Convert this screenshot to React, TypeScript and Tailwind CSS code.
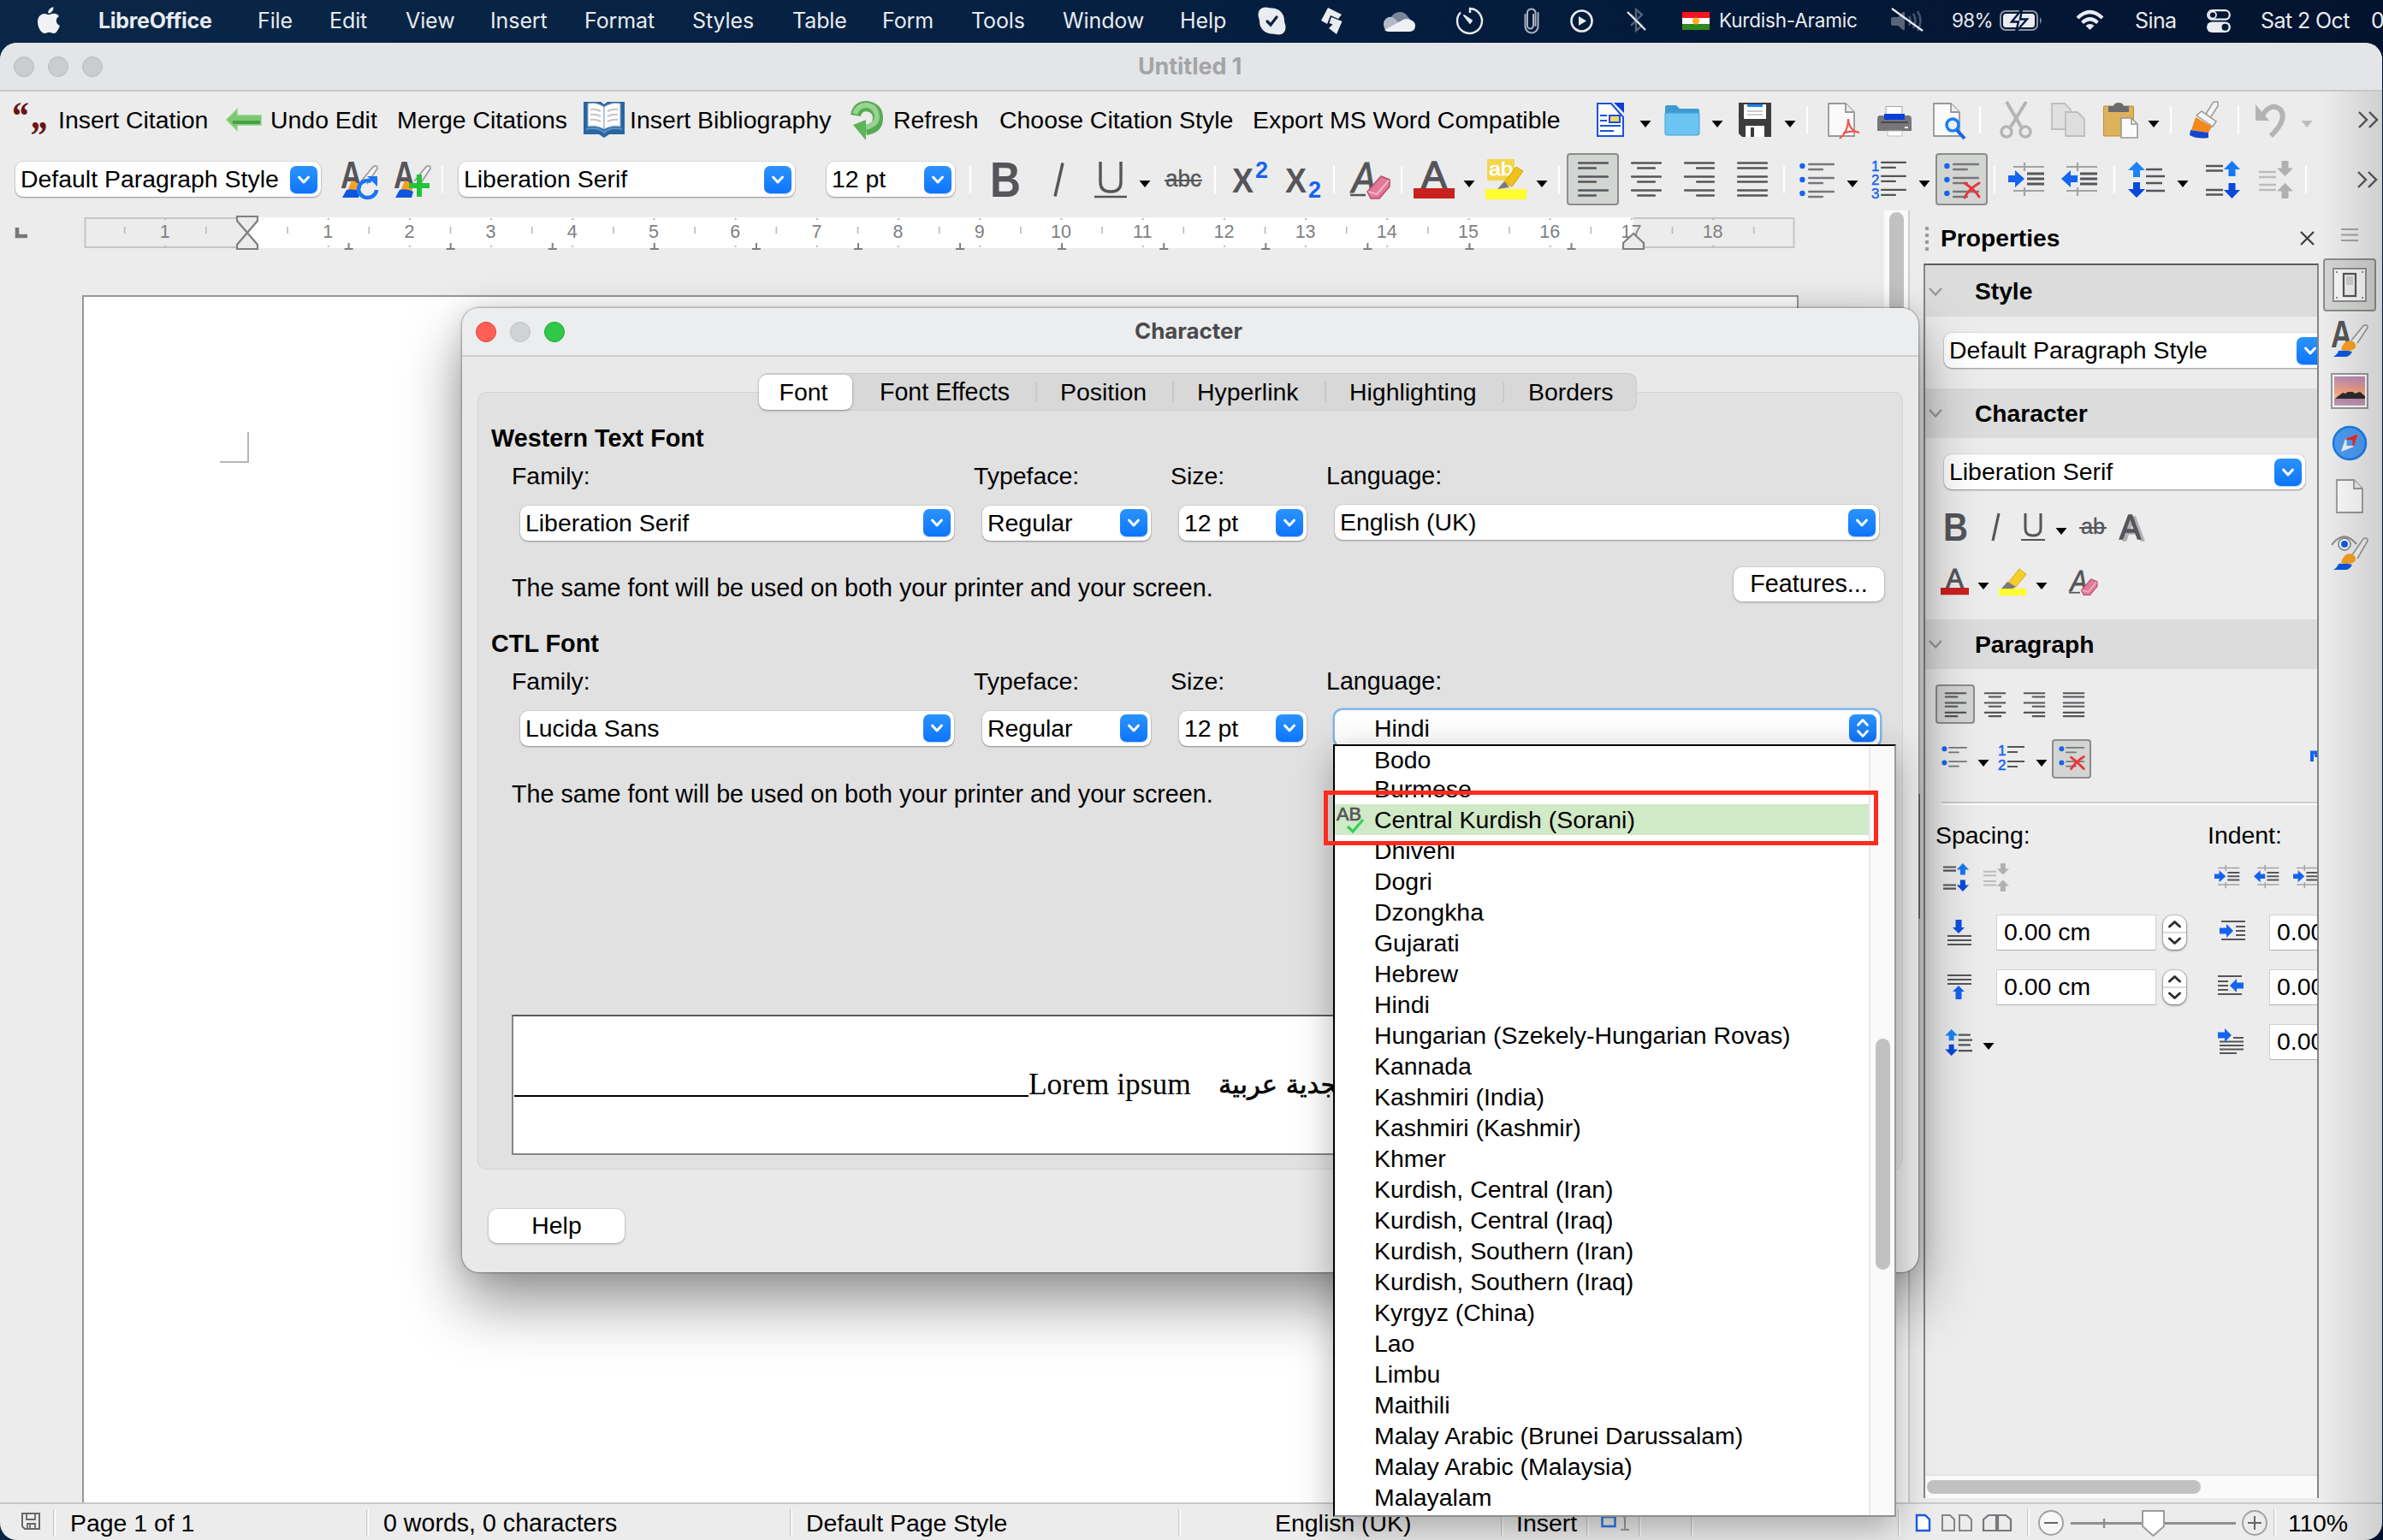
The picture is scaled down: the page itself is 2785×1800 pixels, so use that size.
import React from "react";

const INK = "#55555a";
const BLUE = "#1464f0";

type CellProps = { w: string; children?: React.ReactNode; className?: string };

/* Fixed-pitch slot used by the menu bar and tool bars. */
function Cell({ w, children, className = "" }: CellProps) {
  return <div className={`${w} shrink-0 flex items-center whitespace-nowrap ${className}`}>{children}</div>;
}

function Svg({ w, h, children, vb, className = "" }: { w: number; h: number; children: React.ReactNode; vb?: string; className?: string }) {
  return (
    <svg width={w} height={h} viewBox={vb ?? `0 0 ${w} ${h}`} fill="none" className={`shrink-0 overflow-visible ${className}`}>
      {children}
    </svg>
  );
}

function Glyph({ x = 0, y, size, len, fill = INK, weight = "normal", italic = false, heavy = 0, children, family = "Liberation Sans" }: any) {
  return (
    <text x={x} y={y} fontSize={size} fill={fill} stroke={heavy ? fill : undefined} strokeWidth={heavy} fontWeight={weight} fontStyle={italic ? "italic" : "normal"} fontFamily={`"${family}", sans-serif`} textLength={len} lengthAdjust="spacingAndGlyphs">
      {children}
    </text>
  );
}

function Caret({ faded = false }: { faded?: boolean }) {
  return (
    <Svg w={14} h={18}>
      <path d="M0.5 10H13.5L7 18Z" fill={faded ? "#bdbdbd" : "#000"} />
    </Svg>
  );
}

const Sep = () => <div className="h-8 w-[2px] bg-white" />;

/* ---------- form controls ---------- */

function DropButton({ double = false }: { double?: boolean }) {
  return (
    <div className="mr-1 flex h-8 w-8 shrink-0 items-center justify-center rounded-[7px] bg-linear-to-b from-[#2b93fb] to-[#0d74fc] shadow-[0_1px_1px_rgba(0,80,200,0.3)]">
      {double ? (
        <Svg w={14} h={22}>
          <path d="M1.5 7.5L7 1.5L12.5 7.5M1.5 14.5L7 20.5L12.5 14.5" stroke="#fff" strokeWidth={2.8} strokeLinecap="round" strokeLinejoin="round" />
        </Svg>
      ) : (
        <Svg w={14} h={10}>
          <path d="M1.500 2L7 8L12.500 2" stroke="#fff" strokeWidth={3} strokeLinecap="round" strokeLinejoin="round" />
        </Svg>
      )}
    </div>
  );
}

function Combo({ text, className }: { text: string; className: string }) {
  return (
    <div className={`${className} flex h-[41px] shrink-0 items-center justify-between rounded-[9px] bg-white pl-[6px] shadow-[0_0_0_1px_rgba(0,0,0,0.06),0_1px_2px_rgba(0,0,0,0.35)]`}>
      <span className="whitespace-nowrap">{text}</span>
      <DropButton />
    </div>
  );
}

/* ---------- paragraph icons ---------- */

type Align = "left" | "center" | "right" | "full";
function AlignIcon({ kind, w = 36, h = 41 }: { kind: Align; w?: number; h?: number }) {
  const ys = [1.5, 7.5, 17.5, 23.5, 33.5, 39.5];
  return (
    <Svg w={w} h={h} vb="0 0 36 41">
      {ys.map((y, i) => {
        const short = i % 2 === 1 && kind !== "full";
        const len = short ? 22 : 36;
        const x = kind === "left" ? 0 : kind === "right" ? 36 - len : (36 - len) / 2;
        return <rect key={y} x={x} y={y - 1.3} width={len} height={w < 36 ? 3 : 2.6} rx={1} fill={INK} />;
      })}
    </Svg>
  );
}

function BulletIcon({ w = 41, rows = 3, cross = false }: { w?: number; rows?: number; cross?: boolean }) {
  const h = rows === 3 ? 44 : 40;
  const step = rows === 3 ? 16 : 23;
  return (
    <Svg w={w} h={(h * w) / 41} vb={`0 0 41 ${h}`}>
      {Array.from({ length: rows }, (_, i) => (
        <g key={i}>
          <circle cx={3.400} cy={6 + i * step} r={rows === 3 ? 3.200 : 4.200} fill={BLUE} />
          <rect x={10} y={2.700 + i * step} width={31} height={2.600} rx={1} fill="#77777b" />
          <rect x={10} y={(rows === 3 ? 8.700 : 10.500) + i * step} width={18} height={2.600} rx={1} fill="#77777b" />
        </g>
      ))}
      {cross && <path d={rows === 3 ? "M24 26C30 30 38 37 41 42M41 26C34 30 27 37 24 43" : "M19 20C26 25 34 33 40 39M40 19C32 24 24 32 19 39"} stroke="#ee3438" strokeWidth={rows === 3 ? 3 : 4} strokeLinecap="round" />}
    </Svg>
  );
}

function NumberIcon() {
  return (
    <Svg w={41} h={46}>
      {[0, 1, 2].map((i) => (
        <g key={i}>
          <Glyph x={0} y={13 + i * 16} size={17} fill={BLUE} heavy={0.4}>{i + 1}</Glyph>
          <rect x={11} y={1.700 + i * 16} width={30} height={2.400} rx={1} fill={INK} />
          <rect x={11} y={7.700 + i * 16} width={18} height={2.400} rx={1} fill={INK} />
        </g>
      ))}
    </Svg>
  );
}

function IndentIcon({ w = 43, left = false }: { w?: number; left?: boolean }) {
  return (
    <Svg w={w} h={(w * 40) / 43} vb="0 0 43 40">
      <path d="M6 5H42M6 33H42M19 0V10M19 29V39" stroke="#a3a3a7" strokeWidth={2.200} />
      <path d="M22 13H42M22 19H42M22 25H42" stroke={INK} strokeWidth={2.800} />
      {left ? <path d="M0 19L11 9V15H19V23H11V29Z" fill={BLUE} /> : <path d="M19 19L8 9V15H0V23H8V29Z" fill={BLUE} />}
    </Svg>
  );
}

function LineSpacingIcon({ w = 42 }: { w?: number }) {
  return (
    <Svg w={w} h={w} vb="0 0 42 42">
      <path d="M9 0L19 10H13V18H5V10H-1Z" fill="#1b84f8" />
      <path d="M9 42L19 32H13V24H5V32H-1Z" fill="#0b48dc" />
      <path d="M20 9H39M20 17H42M20 25H39M20 34H42" stroke={INK} strokeWidth={w < 40 ? 3 : 2.500} />
    </Svg>
  );
}

function ParaSpacingIcon({ w = 40, off = false }: { w?: number; off?: boolean }) {
  const sw = w < 40 ? 2.9 : 2.4;
  return off ? (
    <Svg w={w} h={(w * 44) / 40} vb="0 0 40 44">
      <path d="M0 13H20M0 19H20M0 28H20M0 34H20" stroke="#bcbcbc" strokeWidth={sw} />
      <path d="M30.500 18L21 8.500H26.500V0H34.500V8.500H40Z M30.500 26L21 35.500H26.500V44H34.500V35.500H40Z" fill="#b0b0b0" />
    </Svg>
  ) : (
    <Svg w={w} h={(w * 44) / 40} vb="0 0 40 44">
      <path d="M0 6H20M0 11.500H20M0 34H20M0 39.500H20" stroke={INK} strokeWidth={sw} />
      <path d="M30.500 0L40 10H34.500V18H26.500V10H21Z" fill="#1577f5" />
      <path d="M30.500 44L21 34H26.500V26H34.500V34H40Z" fill="#0b48dc" />
    </Svg>
  );
}

/* Text-on-lines icons used beside the spacing and indent fields. */
function FieldIcon({ kind }: { kind: "above" | "below" | "before" | "after" | "first" }) {
  const lines: Record<string, string> = {
    above: "M1 19H29M1 24H29M1 29H29",
    below: "M1 1H29M1 6H29M1 11H29",
    before: "M2 2H30M19 8H30M19 13H30M19 18H30M2 23H30",
    after: "M0 2H28M0 8H12M0 13H12M0 18H12M0 23H28",
    first: "M18 10H30M2 14.500H30M2 19H30M2 23.500H30M2 28H22",
  };
  const arrows: Record<string, string> = {
    above: "M14 16L7 9H10.500V0H17.500V9H21Z",
    below: "M14 13L21 20H17.500V29H10.500V20H7Z",
    before: "M16 13L8 5V9.500H0V16.500H8V21Z",
    after: "M14 13L22 5V9.500H30V16.500H22V21Z",
    first: "M16 7L8 -1V3.500H0V10.500H8V15Z",
  };
  return (
    <Svg w={30} h={30}>
      <path d={lines[kind]} stroke={INK} strokeWidth={2.200} />
      <path d={arrows[kind]} fill={kind === "above" ? "#0b4fe0" : BLUE} />
    </Svg>
  );
}

/* ---------- character icons ---------- */

function EraserIcon({ w = 46 }: { w?: number }) {
  return (
    <Svg w={w} h={(w * 44) / 46} vb="0 0 46 44">
      <Glyph x={2} y={37} size={50} len={28} italic heavy={1.2}>A</Glyph>
      <path d="M0 40H18" stroke={INK} strokeWidth={2.400} />
      <path d="M20 36L36 18L46 22V30L34 44L24 44Z" fill="#e07a98" stroke="#b9486c" strokeWidth={1.500} strokeLinejoin="round" />
      <path d="M21 36L31 39L45 23" stroke="#f6b3c5" strokeWidth={2} />
    </Svg>
  );
}

function FontColorIcon({ w = 48 }: { w?: number }) {
  return (
    <Svg w={w} h={(w * 44) / 48} vb="0 0 48 44">
      <Glyph x={9} y={32} size={45} len={30} heavy={1.4}>A</Glyph>
      <rect x={0} y={32} width={48} height={12} fill="#c9211e" />
    </Svg>
  );
}

function StyleBrush({ badge, w = 44 }: { badge?: "refresh" | "plus" | "big"; w?: number }) {
  const big = badge === "big";
  return (
    <Svg w={w} h={w} vb="0 0 44 44">
      <path d="M24 24L38 7Q43 4 43 9L31 27" fill="#f4f4f4" stroke="#9c9ca0" strokeWidth={1.800} />
      <Glyph x={0} y={32} size={45} len={25} weight="bold">A</Glyph>
      <path d={big ? "M12 35Q14 25 22 24Q30 25 29 32Q25 38 12 35Z" : "M8 35L13 23L22 27L22 36Z"} fill="#f7a021" />
      <path d={big ? "M3 43Q8 40 9 36Q18 35 25 37Q22 43 17 43Z" : "M2 43L7 34Q16 32 23 36L21 43Z"} fill="#0b57e0" />
      {badge === "refresh" && (
        <>
          <path d="M36 24A10.500 10 0 1 0 42 34" stroke="#1b74f4" strokeWidth={4.500} />
          <path d="M31 18H43V30Z" fill="#1b74f4" />
        </>
      )}
      {badge === "plus" && <path d="M30 16V42M18 29H42" stroke="#22c33b" strokeWidth={6} />}
    </Svg>
  );
}

/* ---------- document icons ---------- */

function PageShape({ w, h, children }: { w: number; h: number; children?: React.ReactNode }) {
  return (
    <Svg w={w} h={h} vb={`0 0 ${w} ${h}`}>
      <path d={`M1 1H21L31 11V${h - 1}H1Z`} fill="#fafafa" stroke="#98989c" strokeWidth={1.800} />
      <path d="M21 1V11H31" fill="#ececec" stroke="#98989c" strokeWidth={1.800} />
      {children}
    </Svg>
  );
}

function BookIcon() {
  return (
    <Svg w={48} h={42}>
      <path d="M0 0H20L24 3L28 0H48V38H30L24 42L18 38H0Z" fill="#2a65a0" />
      <path d="M5 2Q16 0 24 6V32Q15 27 5 29Z" fill="#fdfdfd" stroke="#8aa6c4" />
      <path d="M43 2Q32 0 24 6V32Q33 27 43 29Z" fill="#fdfdfd" stroke="#8aa6c4" />
      <path d="M8 9Q14 8 20 11M8 15Q14 14 20 17M8 21Q14 20 20 23M40 9Q34 8 28 11M40 15Q34 14 28 17M40 21Q34 20 28 23" stroke="#c4c4c4" strokeWidth={2.200} />
      <path d="M3 32Q17 29 24 36Q31 29 45 32" stroke="#5c94cb" strokeWidth={2} />
    </Svg>
  );
}

function MenuBar() {
  return (
    <div className="flex h-[50px] shrink-0 items-center pb-[2px] pl-[44px] font-[Inter,sans-serif] text-[25px] tracking-[-0.1px] text-[#e8ebf0]">
      <Cell w="w-[71px]">
        <Svg w={26} h={32}>
          <path d="M18.500 0.300C18.800 4 15.500 7.800 12.300 7.600C11.800 4.200 15 0.700 18.500 0.300ZM13 9.300C14.500 9.300 16.300 7.800 19.200 7.800C21.500 7.800 23.600 9 24.900 10.900C20.300 13.600 21 19.900 25.900 21.900C24.700 25.400 22 31 18.900 31C16.800 31 16 29.700 13.400 29.700C10.800 29.700 9.900 31 7.900 31C4.400 31 0 24.200 0 17.600C0 11.400 4 8 7.800 8C10.200 8 11.800 9.300 13 9.300Z" fill="#f0f2f5" />
        </Svg>
      </Cell>
      <Cell w="w-[186px]" className="font-bold tracking-[-0.3px]">LibreOffice</Cell>
      <Cell w="w-[84px]">File</Cell>
      <Cell w="w-[89px]">Edit</Cell>
      <Cell w="w-[99px]">View</Cell>
      <Cell w="w-[110px]">Insert</Cell>
      <Cell w="w-[126px]">Format</Cell>
      <Cell w="w-[117px]">Styles</Cell>
      <Cell w="w-[105px]">Table</Cell>
      <Cell w="w-[104px]">Form</Cell>
      <Cell w="w-[107px]">Tools</Cell>
      <Cell w="w-[137px]">Window</Cell>
      <Cell w="w-[91px]">Help</Cell>
      <Cell w="w-[74px]">
        <Svg w={33} h={33}>
          <path d="M9 0.500C12 0.500 13 1.500 16.500 1.500C25 1.500 31 8 31 16C31 19 32.500 20 32.500 24C32.500 29 29 32.500 24 32.500C21 32.500 20 31.500 16.500 31.500C8 31.500 2 25 2 17C2 14 0.500 13 0.500 9C0.500 4 4 0.500 9 0.500Z" fill="#e9ecf1" />
          <path d="M11 17L15 21L22 12" stroke="#0b2142" strokeWidth={3.200} strokeLinecap="round" />
        </Svg>
      </Cell>
      <Cell w="w-[70px]">
        <Svg w={25} h={31}>
          <path d="M8 0L24 8L20 13L11 9L7 19L0 15Z" fill="#e9ecf1" />
          <path d="M12 11L24.500 16L18 31L9 24L13.500 19.500L9.500 18Z" fill="#e9ecf1" />
        </Svg>
      </Cell>
      <Cell w="w-[88px]">
        <Svg w={40} h={27}>
          <path d="M11 12A11 11 0 0 1 31 8L36 14L20 20L10 14Z" fill="#7b8698" />
          <path d="M9 26A9 9 0 0 1 9 9Q14 8 19 14L33 26Z" fill="#b4bbc7" />
          <path d="M4 24L26 12Q30 10 34 12Q40 14 40 19Q40 26 33 26H9Q6 26 4 24Z" fill="#eef0f4" />
        </Svg>
      </Cell>
      <Cell w="w-[79px]">
        <Svg w={32} h={32}>
          <path d="M16 7V2A14.500 14.500 0 1 1 5 6.500" stroke="#e9ecf1" strokeWidth={2.400} />
          <path d="M9 10L18 16L16 19Z" fill="#e9ecf1" stroke="#e9ecf1" strokeWidth={2} strokeLinejoin="round" />
        </Svg>
      </Cell>
      <Cell w="w-[54px]">
        <Svg w={18} h={32}>
          <path d="M1.500 9V23A7.500 7.500 0 0 0 16.500 23V7M13.500 22V6A5 5 0 0 0 4 6V22A3.500 3.500 0 0 0 11 22V9" stroke="#aab2c0" strokeWidth={2} strokeLinecap="round" />
        </Svg>
      </Cell>
      <Cell w="w-[67px]">
        <Svg w={27} h={27}>
          <circle cx={13.500} cy={13.500} r={12} stroke="#e9ecf1" strokeWidth={2.600} />
          <path d="M10 8V19L19 13.500Z" fill="#e9ecf1" />
        </Svg>
      </Cell>
      <Cell w="w-[64px]">
        <Svg w={22} h={28}>
          <path d="M4 7L17 20L10 26V1L17 7L4 20" stroke="#566378" strokeWidth={2.400} />
          <path d="M0 4L21 25" stroke="#e9ecf1" strokeWidth={2.200} />
        </Svg>
      </Cell>
      <Cell w="w-[43px]">
        <Svg w={32} h={21}>
          <rect width={32} height={7} fill="#fb1220" />
          <rect y={7} width={32} height={7} fill="#fff" />
          <rect y={14} width={32} height={7} fill="#2f8a1d" />
          <circle cx={16} cy={10.500} r={4} fill="#fdb022" />
        </Svg>
      </Cell>
      <Cell w="w-[201px]" className="text-[22.500px] tracking-[-0.2px]">Kurdish-Aramic</Cell>
      <Cell w="w-[71px]">
        <Svg w={38} h={28}>
          <path d="M0 12Q0 10 2 10H8L14 4Q16 3 16 5V24Q16 26 14 25L8 20H2Q0 20 0 18Z" fill="#566378" />
          <path d="M21 9Q24 14 21 20M26 6Q31 14 26 23M31 3Q38 14 31 26" stroke="#46536a" strokeWidth={2.600} />
          <path d="M1 0L37 26" stroke="#e9ecf1" strokeWidth={2.200} />
        </Svg>
      </Cell>
      <Cell w="w-[56px]" className="text-[22.500px] tracking-[-0.7px]">98%</Cell>
      <Cell w="w-[89px]">
        <Svg w={51} h={24}>
          <rect x={1} y={1} width={43} height={22} rx={6} stroke="#8b95a5" strokeWidth={2} />
          <rect x={4} y={4} width={37} height={16} rx={3.500} fill="#e9ecf1" />
          <path d="M47 8Q50.500 12 47 16Z" fill="#8b95a5" />
          <path d="M26 -1L14 13.500H22L19 25L32 10.500H24Z" fill="#e9ecf1" stroke="#03193b" strokeWidth={2.400} />
        </Svg>
      </Cell>
      <Cell w="w-[69px]">
        <Svg w={33} h={24}>
          <path d="M2 9Q16.500 -5 31 9M7.500 14.500Q16.500 6 25.500 14.500" stroke="#e9ecf1" strokeWidth={4.200} />
          <path d="M16.500 23L11.500 18Q16.500 14 21.500 18Z" fill="#e9ecf1" />
        </Svg>
      </Cell>
      <Cell w="w-[84px]" className="tracking-[-0.6px]">Sina</Cell>
      <Cell w="w-[63px]">
        <Svg w={28} h={27}>
          <rect x={1.200} y={1.200} width={25.600} height={10.500} rx={5.200} stroke="#e9ecf1" strokeWidth={2.200} />
          <circle cx={7} cy={6.500} r={4} stroke="#e9ecf1" strokeWidth={1.800} />
          <rect x={0} y={14.500} width={28} height={12.500} rx={6.200} fill="#e9ecf1" />
          <circle cx={21.500} cy={20.700} r={4} fill="#041c3d" />
        </Svg>
      </Cell>
      <Cell w="w-[129px]" className="tracking-[-0.6px]">Sat 2 Oct</Cell>
      <Cell w="w-[30px]">0</Cell>
    </div>
  );
}

function StandardBar() {
  return (
    <div className="flex h-[66px] shrink-0 items-center pl-[12px]">
      <Cell w="w-[56px]">
        <Svg w={46} h={40}>
          <Glyph x={0} y={31} size={46} len={21} fill="#6b1416" weight="bold" family="Liberation Serif" italic>“</Glyph>
          <Glyph x={25} y={30} size={46} len={21} fill="#6b1416" weight="bold" family="Liberation Serif" italic>„</Glyph>
        </Svg>
      </Cell>
      <Cell w="w-[196px]">Insert Citation</Cell>
      <Cell w="w-[52px]">
        <Svg w={43} h={26}>
          <path d="M1 13L13 1V8H41V19H13V25Z" fill="#7cc871" stroke="#8dcf86" strokeWidth={1.500} />
          <path d="M8 16H40" stroke="#45a042" strokeWidth={4} />
        </Svg>
      </Cell>
      <Cell w="w-[148px]">Undo Edit</Cell>
      <Cell w="w-[218px]">Merge Citations</Cell>
      <Cell w="w-[54px]"><BookIcon /></Cell>
      <Cell w="w-[258px]">Insert Bibliography</Cell>
      <Cell w="w-[50px]">
        <Svg w={40} h={44}>
          <path d="M6 17Q8 6 19 6Q32 8 32 20Q32 32 18 34" stroke="#58ab53" strokeWidth={12} />
          <path d="M5 15Q9 4 20 5Q30 7 31 18Q31 28 17 31" stroke="#98d391" strokeWidth={6} />
          <path d="M3 28L18 22V46Z" fill="#5fb45a" />
        </Svg>
      </Cell>
      <Cell w="w-[124px]">Refresh</Cell>
      <Cell w="w-[296px]">Choose Citation Style</Cell>
      <Cell w="w-[402px]">Export MS Word Compatible</Cell>
      <Cell w="w-[50px]">
        <Svg w={32} h={40}>
          <path d="M1 1H17L31 17V39H1Z" fill="#fff" stroke="#1c51dd" strokeWidth={2} />
          <path d="M20 0H32V12Z" fill="#0d3fd6" />
          <path d="M4 15H12M4 21H12M4 27H28M4 33H20" stroke="#1c51dd" strokeWidth={2} />
          <rect x={15} y={15} width={12} height={8} fill="#fbd66b" stroke="#1c51dd" strokeWidth={2} />
        </Svg>
      </Cell>
      <Cell w="w-[30px]"><Caret /></Cell>
      <Cell w="w-[54px]">
        <Svg w={40} h={37}>
          <path d="M0 3Q0 1 2 1H13L17 5H38Q40 5 40 7V20H0Z" fill="#3e9bd0" />
          <path d="M0 10H40V34Q40 36 38 36H2Q0 36 0 34Z" fill="#6cc4f2" stroke="#3f9fd6" />
        </Svg>
      </Cell>
      <Cell w="w-[32px]"><Caret /></Cell>
      <Cell w="w-[53px]">
        <Svg w={38} h={40}>
          <path d="M0 0H38V40H4L0 36Z" fill="#3d3d40" />
          <rect x={6} y={2} width={26} height={17} fill="#fff" />
          <rect x={10} y={2} width={18} height={3} fill="#1b84f8" />
          <path d="M10 10H28M10 14H28" stroke="#bdbdbd" strokeWidth={1.600} />
          <path d="M8 27H30V40H8Z" fill="#fff" />
          <rect x={14} y={29} width={4} height={11} fill="#3d3d40" />
        </Svg>
      </Cell>
      <Cell w="w-[26px]"><Caret /></Cell>
      <Cell w="w-[25px]"><Sep /></Cell>
      <Cell w="w-[58px]">
        <PageShape w={38} h={40}>
          <path d="M14 42Q24 34 24 19M24 19Q25 33 37 35M18 36Q28 32 37 35" stroke="#f2554f" strokeWidth={2.200} />
        </PageShape>
      </Cell>
      <Cell w="w-[65px]" className="pt-1">
        <Svg w={40} h={36}>
          <rect x={10} y={0.500} width={19} height={14} fill="#fff" stroke="#a5a5a8" />
          <path d="M2 11H38Q40 12 40 15V29H0V15Q0 12 2 11Z" fill="#77777b" />
          <rect x={8} y={9} width={24} height={7} fill="#0d3fd6" />
          <path d="M4 19H36" stroke="#4b4b4f" strokeWidth={2} />
          <rect x={12} y={29} width={17} height={6} fill="#fff" stroke="#c0c0c0" />
          <rect x={32} y={24} width={4} height={2} fill="#fff" />
        </Svg>
      </Cell>
      <Cell w="w-[54px]">
        <PageShape w={38} h={40}>
          <circle cx={23} cy={26} r={7} fill="#eaf3ff" stroke="#1b7ff5" strokeWidth={3.500} />
          <path d="M28 32L37 42" stroke="#1467ee" strokeWidth={4} />
        </PageShape>
      </Cell>
      <Cell w="w-[24px]"><Sep /></Cell>
      <Cell w="w-[60px]">
        <Svg w={38} h={44}>
          <path d="M8 1L25 30M31 1L13 30" stroke="#b5b5b7" strokeWidth={4} />
          <circle cx={8} cy={36} r={6} stroke="#b5b5b7" strokeWidth={3.500} />
          <circle cx={30} cy={36} r={6} stroke="#b5b5b7" strokeWidth={3.500} />
        </Svg>
      </Cell>
      <Cell w="w-[61px]">
        <Svg w={40} h={40}>
          <path d="M1 1H16L23 8V31H1Z" fill="#e0e0e0" stroke="#bebec0" strokeWidth={1.800} />
          <path d="M17 11H31L39 19V39H17Z" fill="#dedede" stroke="#bebec0" strokeWidth={1.800} />
        </Svg>
      </Cell>
      <Cell w="w-[52px]">
        <Svg w={41} h={41}>
          <rect x={0.500} y={4} width={35} height={35} rx={1} fill="#ddb25b" stroke="#b98c34" />
          <path d="M6 11V4H12Q13 0 18 0Q23 0 24 4H30V11Z" fill="#6b6b6e" />
          <path d="M21 18H33L40 25V41H21Z" fill="#fbfbfb" stroke="#98989c" strokeWidth={1.600} />
          <path d="M33 18V25H40" stroke="#98989c" strokeWidth={1.600} />
        </Svg>
      </Cell>
      <Cell w="w-[26px]"><Caret /></Cell>
      <Cell w="w-[22px]"><Sep /></Cell>
      <Cell w="w-[57px]">
        <Svg w={36} h={44}>
          <path d="M20 15L29 1H34V6L25 20Z" fill="#f4f4f4" stroke="#9a9a9e" strokeWidth={1.500} />
          <path d="M9 17L15 12L32 24L28 30Z" fill="#f4f4f4" stroke="#9a9a9e" strokeWidth={1.500} />
          <path d="M8 19L27 30L23 37L3 34Z" fill="#f3881b" />
          <path d="M2 34L23 37V43Q10 45 1 40Z" fill="#1545cf" />
        </Svg>
      </Cell>
      <Cell w="w-[21px]"><Sep /></Cell>
      <Cell w="w-[53px]">
        <Svg w={36} h={42}>
          <path d="M8 16Q18 0 29 9Q38 20 18 40" stroke="#b4b4b6" strokeWidth={6} />
          <path d="M0 3V22H16Z" fill="#b4b4b6" />
        </Svg>
      </Cell>
      <Cell w="w-[67px]"><Caret faded /></Cell>
      <Chevrons />
    </div>
  );
}

function Chevrons() {
  return (
    <Svg w={24} h={20}>
      <path d="M1 1L10 10L1 19M13 1L22 10L13 19" stroke={INK} strokeWidth={2.400} />
    </Svg>
  );
}

const pressed = "flex items-center justify-center rounded-[4px] border-2 border-[#8b8d8a] bg-[#d3d5d2]";

function FormattingBar() {
  return (
    <div className="flex h-[73px] shrink-0 items-center pl-[18px]">
      <Cell w="w-[380px]"><Combo text="Default Paragraph Style" className="w-[357px]" /></Cell>
      <Cell w="w-[62px]"><StyleBrush badge="refresh" /></Cell>
      <Cell w="w-[56px]"><StyleBrush badge="plus" /></Cell>
      <Cell w="w-[20px]"><Sep /></Cell>
      <Cell w="w-[430px]"><Combo text="Liberation Serif" className="w-[393px]" /></Cell>
      <Cell w="w-[167px]"><Combo text="12 pt" className="w-[150px]" /></Cell>
      <Cell w="w-[26px]"><Sep /></Cell>
      <Cell w="w-[71px]"><Svg w={32} h={40}><Glyph x={-2} y={40} size={57} len={36} weight="bold">B</Glyph></Svg></Cell>
      <Cell w="w-[49px]"><Svg w={14} h={40}><path d="M12 0.500L3 39.500" stroke={INK} strokeWidth={3.400} /></Svg></Cell>
      <Cell w="w-[52px]">
        <Svg w={38} h={42}>
          <path d="M7 0V24Q7 35 19 35Q31 35 31 24V0" stroke={INK} strokeWidth={3.400} />
          <path d="M0 41H38" stroke={INK} strokeWidth={2.400} />
        </Svg>
      </Cell>
      <Cell w="w-[30px]"><Caret /></Cell>
      <Cell w="w-[58px]">
        <Svg w={44} h={24}>
          <Glyph x={1} y={20} size={27} len={42} heavy={0.4}>abc</Glyph>
          <path d="M0 13H44" stroke={INK} strokeWidth={2} />
        </Svg>
      </Cell>
      <Cell w="w-[21px]"><Sep /></Cell>
      <Cell w="w-[62px]">
        <Svg w={42} h={42}>
          <Glyph x={0} y={36} size={40} len={25} weight="bold">X</Glyph>
          <Glyph x={27} y={19} size={28} len={15} fill={BLUE} weight="bold">2</Glyph>
        </Svg>
      </Cell>
      <Cell w="w-[56px]">
        <Svg w={42} h={42}>
          <Glyph x={0} y={36} size={40} len={25} weight="bold">X</Glyph>
          <Glyph x={27} y={42} size={28} len={15} fill={BLUE} weight="bold">2</Glyph>
        </Svg>
      </Cell>
      <Cell w="w-[20px]"><Sep /></Cell>
      <Cell w="w-[59px]"><EraserIcon /></Cell>
      <Cell w="w-[15px]"><Sep /></Cell>
      <Cell w="w-[58px]"><FontColorIcon /></Cell>
      <Cell w="w-[26px]"><Caret /></Cell>
      <Cell w="w-[59px]">
        <Svg w={48} h={46}>
          <rect x={2} y={-1} width={32} height={25} fill="#f4d64a" />
          <Glyph x={4} y={18} size={22} len={28} fill="#fff" heavy={0.6}>ab</Glyph>
          <path d="M22 26L36 8L44 13L31 31Z" fill="#f2c118" stroke="#cf9f10" />
          <path d="M14 34L22 25L28 32Z" fill="#7a7a7d" />
          <rect x={0} y={34} width={48} height={12} fill="#ffff30" />
        </Svg>
      </Cell>
      <Cell w="w-[26px]"><Caret /></Cell>
      <Cell w="w-[10px]"><Sep /></Cell>
      <Cell w="w-[75px]"><div className={`${pressed} h-[61px] w-[61px]`}><AlignIcon kind="left" /></div></Cell>
      <Cell w="w-[62px]"><AlignIcon kind="center" /></Cell>
      <Cell w="w-[62px]"><AlignIcon kind="right" /></Cell>
      <Cell w="w-[54px]"><AlignIcon kind="full" /></Cell>
      <Cell w="w-[19px]"><Sep /></Cell>
      <Cell w="w-[55px]"><BulletIcon /></Cell>
      <Cell w="w-[29px]"><Caret /></Cell>
      <Cell w="w-[55px]"><NumberIcon /></Cell>
      <Cell w="w-[20px]"><Caret /></Cell>
      <Cell w="w-[68px]"><div className={`${pressed} h-[61px] w-[61px]`}><BulletIcon cross /></div></Cell>
      <Cell w="w-[17px]"><Sep /></Cell>
      <Cell w="w-[62px]"><IndentIcon /></Cell>
      <Cell w="w-[61px]"><IndentIcon left /></Cell>
      <Cell w="w-[18px]"><Sep /></Cell>
      <Cell w="w-[56px]"><LineSpacingIcon /></Cell>
      <Cell w="w-[34px]"><Caret /></Cell>
      <Cell w="w-[62px]"><ParaSpacingIcon /></Cell>
      <Cell w="w-[54px]"><ParaSpacingIcon off /></Cell>
      <Cell w="w-[61px]"><Sep /></Cell>
      <Chevrons />
    </div>
  );
}

function Ruler() {
  const pitch = 95.2;
  const zero = 288.5;
  const nums = Array.from({ length: 20 }, (_, i) => i - 1);
  return (
    <Svg w={2202} h={54}>
      <path d="M20 20V30H32" stroke="#77777b" strokeWidth={4.500} />
      <rect x={99.500} y={9} width={1997} height={34} fill="#ececec" stroke="#c6c6c6" strokeWidth={2} />
      <rect x={zero} y={8} width={1620} height={36} fill="#fff" />
      {nums.map((n) => {
        const x = zero + n * pitch;
        return (
          <g key={n}>
            {n !== 0 && n < 19 && (
              <>
                <path d={`M${x} 9V11M${x} 41V43`} stroke="#b9b9b9" strokeWidth={2} />
                <text x={x - 0.5} y={31.500} textAnchor="middle" fontSize={21.500} fill="#808083" fontFamily='"Liberation Sans", sans-serif'>{Math.abs(n)}</text>
              </>
            )}
            {n < 19 && <path d={`M${x + pitch / 2} 19V27`} stroke="#b9b9b9" strokeWidth={1.600} />}
          </g>
        );
      })}
      <path d={`M${zero - pitch * 1.5} 19V27`} stroke="#b9b9b9" strokeWidth={1.600} />
      {Array.from({ length: 13 }, (_, i) => {
        const x = zero + (i + 1) * 119.08;
        return <path key={i} d={`M${x} 38V45M${x - 5} 45H${x + 5}`} stroke="#808083" strokeWidth={2} />;
      })}
      <path d="M277 7H301V12L277 40V45H301V40L277 12Z" fill="#ececec" stroke="#808083" strokeWidth={2.200} />
      <path d="M1909 27L1921 38V45H1897V38Z" fill="#ececec" stroke="#808083" strokeWidth={2.200} />
    </Svg>
  );
}

function SectionHeader({ title, className }: { title: string; className: string }) {
  return (
    <div className={`${className} flex shrink-0 items-center bg-[#dcdcdc] pl-1`}>
      <Svg w={16} h={10}>
        <path d="M1 1L8 8.500L15 1" stroke="#98989b" strokeWidth={2.400} />
      </Svg>
      <span className="ml-[38px] text-[28.200px] font-bold">{title}</span>
    </div>
  );
}

function NumField() {
  return <div className="flex h-[42px] w-[187px] shrink-0 items-center border border-[#d2d2d2] border-b-[#b0b0b0] bg-white pb-px pl-2">0.00 cm</div>;
}

function Spinner() {
  return (
    <div className="ml-2 flex h-[40px] w-[27px] shrink-0 items-center justify-center rounded-[11px] bg-white shadow-[0_0_0_1px_rgba(0,0,0,0.15),0_1px_3px_rgba(0,0,0,0.5)]">
      <Svg w={27} h={40}>
        <path d="M0 20H27" stroke="#d0d0d0" strokeWidth={1.500} />
        <path d="M7.500 13L13.500 7.500L19.500 13M7.500 27L13.500 32.500L19.500 27" stroke="#2b2b2b" strokeWidth={2.800} strokeLinecap="round" strokeLinejoin="round" />
      </Svg>
    </div>
  );
}

function Sidebar() {
  return (
    <div className="flex w-[482px] shrink-0 flex-col pl-[16px]">
      <div className="flex h-[62px] shrink-0 items-center pt-[3px]">
        <div className="ml-[2px] flex w-[18px] flex-col gap-1">
          <i className="size-1 bg-[#9a9a9d]" /><i className="size-1 bg-[#9a9a9d]" /><i className="size-1 bg-[#9a9a9d]" /><i className="size-1 bg-[#9a9a9d]" />
        </div>
        <span className="w-[420px] text-[28.200px] font-bold">Properties</span>
        <Svg w={17} h={17}><path d="M1 1L16 16M16 1L1 16" stroke="#3e3e40" strokeWidth={2.200} /></Svg>
      </div>
      <div className="flex h-[1443px] w-[462px] shrink-0 flex-col overflow-hidden border-x-2 border-t-2 border-x-[#858585] border-t-[#5b5b5b]">
        <SectionHeader title="Style" className="h-[60px] pt-px" />
        <div className="h-[84px] shrink-0 pt-[19px] pl-[22px]"><Combo text="Default Paragraph Style" className="w-[448px]" /></div>
        <SectionHeader title="Character" className="h-[58px]" />
        <div className="mt-[19px] h-[42px] shrink-0 pl-[22px]"><Combo text="Liberation Serif" className="w-[422px]" /></div>
        <div className="mt-[27px] flex h-8 shrink-0 items-center pl-[23px]">
          <Cell w="w-[53px]"><Svg w={26} h={32}><Glyph x={-2} y={32} size={46} len={29} weight="bold">B</Glyph></Svg></Cell>
          <Cell w="w-[36px]"><Svg w={12} h={32}><path d="M10 0L3 32" stroke={INK} strokeWidth={3.200} /></Svg></Cell>
          <Cell w="w-[40px]">
            <Svg w={28} h={32}><path d="M5 0V18Q5 26 14 26Q23 26 23 18V0" stroke={INK} strokeWidth={3} /><path d="M0 31H28" stroke={INK} strokeWidth={2} /></Svg>
          </Cell>
          <Cell w="w-[28px]"><Caret /></Cell>
          <Cell w="w-[47px]">
            <Svg w={32} h={24}><Glyph x={2} y={20} size={25} len={28} heavy={0.4}>ab</Glyph><path d="M0 13H32" stroke={INK} strokeWidth={2} /></Svg>
          </Cell>
          <Svg w={31} h={31} className="drop-shadow-[4px_2px_0_#b0b0b4]">
            <Glyph x={0} y={29} size={41} len={25} heavy={1.4}>A</Glyph>
          </Svg>
        </div>
        <div className="mt-[32px] flex h-8 shrink-0 items-center pl-[18px]">
          <Cell w="w-[43px]"><FontColorIcon w={33} /></Cell>
          <Cell w="w-[25px]"><Caret /></Cell>
          <Cell w="w-[43px]">
            <Svg w={32} h={32}>
              <path d="M11 17L24 1L32 7L20 22Z" fill="#f6ce2a" stroke="#d8a914" />
              <path d="M3 24L10 16L20 22L14 25Z" fill="#7a7a7d" />
              <rect y={24} width={32} height={8} fill="#ffff30" />
            </Svg>
          </Cell>
          <Cell w="w-[39px]"><Caret /></Cell>
          <EraserIcon w={33} />
        </div>
        <SectionHeader title="Paragraph" className="mt-[28px] h-[58px]" />
        <div className="mt-[18px] flex h-[46px] shrink-0 items-center pl-[12px]">
          <Cell w="w-[55px]"><div className={`${pressed} h-[46px] w-[46px]`}><AlignIcon kind="left" w={29} h={29} /></div></Cell>
          <Cell w="w-[46px]"><AlignIcon kind="center" w={29} h={29} /></Cell>
          <Cell w="w-[46px]"><AlignIcon kind="right" w={29} h={29} /></Cell>
          <AlignIcon kind="full" w={29} h={29} />
        </div>
        <div className="mt-[18px] flex h-[46px] shrink-0 items-center pl-[20px]">
          <Cell w="w-[41px]" className="pb-1"><BulletIcon w={29} rows={2} /></Cell>
          <Cell w="w-[25px]"><Caret /></Cell>
          <Cell w="w-[43px]" className="pb-1">
            <Svg w={30} h={30}>
              <Glyph x={-1} y={13} size={17} fill={BLUE} heavy={0.5}>1</Glyph>
              <Glyph x={-1} y={30} size={17} fill={BLUE} heavy={0.5}>2</Glyph>
              <path d="M10 3H30M10 20H30M10 9H22M10 26H22" stroke={INK} strokeWidth={2} />
            </Svg>
          </Cell>
          <Cell w="w-[19px]"><Caret /></Cell>
          <Cell w="w-[301px]"><div className={`${pressed} h-[46px] w-[46px] pb-1`}><BulletIcon w={29} rows={2} cross /></div></Cell>
          <Svg w={16} h={24}><path d="M3 15V4.500H16M6 8H11" stroke={BLUE} strokeWidth={4} /></Svg>
        </div>
        <div className="mt-[27px] ml-[19px] h-1 shrink-0 border-t-2 border-t-[#cacaca] bg-white" />
        <div className="mt-[17px] flex h-9 shrink-0 items-center pl-[12px]">
          <Cell w="w-[318px]">Spacing:</Cell>
          <span>Indent:</span>
        </div>
        <div className="mt-[15px] flex h-8 shrink-0 items-center pl-[21px]">
          <Cell w="w-[47px]"><ParaSpacingIcon w={30} /></Cell>
          <Cell w="w-[270px]"><ParaSpacingIcon w={30} off /></Cell>
          <Cell w="w-[46px]"><IndentIcon w={30} /></Cell>
          <Cell w="w-[46px]"><IndentIcon w={30} left /></Cell>
          <IndentIcon w={30} />
        </div>
        <div className="mt-[28px] flex h-[42px] shrink-0 items-center pl-[25px]">
          <Cell w="w-[58px]"><FieldIcon kind="above" /></Cell>
          <NumField />
          <Spinner />
          <div className="ml-[39px] flex w-[58px] shrink-0"><FieldIcon kind="before" /></div>
          <NumField />
        </div>
        <div className="mt-[22px] flex h-[42px] shrink-0 items-center pl-[25px]">
          <Cell w="w-[58px]"><FieldIcon kind="below" /></Cell>
          <NumField />
          <Spinner />
          <div className="ml-[37px] flex w-[60px] shrink-0"><FieldIcon kind="after" /></div>
          <NumField />
        </div>
        <div className="mt-[22px] flex h-[42px] shrink-0 items-center pl-[24px]">
          <Cell w="w-[43px]"><LineSpacingIcon w={31} /></Cell>
          <Cell w="w-[275px]"><Caret /></Cell>
          <Cell w="w-[60px]"><FieldIcon kind="first" /></Cell>
          <NumField />
        </div>
        <div className="mt-auto flex h-[28px] shrink-0 items-center border-t-2 border-[#e4e4e4] bg-[#fafafa] pl-[2px]">
          <div className="h-4 w-[320px] rounded-full bg-[#c1c1c1]" />
        </div>
      </div>
    </div>
  );
}

function TabStrip() {
  return (
    <div className="flex w-[64px] shrink-0 flex-col items-center">
      <div className="flex h-[56px] shrink-0 items-center pt-[2px]">
        <Svg w={20} h={16}><path d="M0 1H20M0 7.500H20M0 14H20" stroke="#a3a3a6" strokeWidth={2} /></Svg>
      </div>
      <div className={`${pressed} h-[62px] w-[62px] shrink-0`}>
        <Svg w={40} h={40}>
          <rect x={1} y={1} width={38} height={38} fill="#f7f7f7" stroke="#8e8e92" strokeWidth={2} />
          <rect x={13} y={7} width={14} height={26} fill="#f0f0f0" stroke="#55555a" strokeWidth={2.200} />
          <rect x={16} y={10} width={8} height={10} fill="#cfcfd2" />
          <path d="M4 5H6M34 5H36M4 35H6M34 35H36" stroke="#8e8e92" strokeWidth={2} />
        </Svg>
      </div>
      <div className="mt-[10px] flex h-[44px] shrink-0 items-center"><StyleBrush badge="big" /></div>
      <div className="mt-[18px] flex h-[42px] shrink-0 items-center">
        <Svg w={44} h={42}>
          <defs>
            <linearGradient id="dusk" x1="0" y1="0" x2="0" y2="1">
              <stop offset="0" stopColor="#b98bb8" /><stop offset="0.5" stopColor="#f2a183" /><stop offset="0.72" stopColor="#f6bb95" /><stop offset="0.76" stopColor="#b58aa8" /><stop offset="1" stopColor="#c79bb8" />
            </linearGradient>
          </defs>
          <rect x={1} y={1} width={42} height={40} fill="#fff" stroke="#97979b" strokeWidth={2} />
          <rect x={4} y={4} width={36} height={34} fill="url(#dusk)" />
          <path d="M6 29L14 23L17 24L20 22H26L28 24L34 22L40 27V30H6Z" fill="#2d2a2e" />
        </Svg>
      </div>
      <div className="mt-[19px] flex h-[42px] shrink-0 items-center">
        <Svg w={42} h={42}>
          <circle cx={21} cy={21} r={19} fill="#4b9bf0" stroke="#1b7be8" strokeWidth={2.500} />
          <path d="M31 10L16 16L11 31L26 25Z" fill="#f1f1f1" />
          <path d="M31 10L16 16L26 25Z" fill="#df2b2b" />
          <rect x={17.500} y={17} width={7} height={7} fill="#4b9bf0" />
        </Svg>
      </div>
      <div className="mt-[21px] flex h-[40px] shrink-0 items-center"><PageShape w={32} h={40} /></div>
      <div className="mt-[25px] flex h-[44px] shrink-0 items-center">
        <Svg w={44} h={42}>
          <path d="M24 24L38 4Q43 1 43 6L31 27" fill="#f4f4f4" stroke="#9c9ca0" strokeWidth={1.800} />
          <path d="M1 11Q15 -8 30 10" stroke="#8e8e92" strokeWidth={2.200} />
          <circle cx={16} cy={10} r={7} fill="#fff" stroke="#8e8e92" strokeWidth={1.800} />
          <circle cx={16} cy={10} r={4} fill="#0f5fe8" />
          <path d="M12 32Q14 22 22 21Q30 22 29 29Q25 35 12 32Z" fill="#f7a021" />
          <path d="M3 40Q8 37 9 33Q18 32 25 34Q22 40 17 40Z" fill="#0b57e0" />
        </Svg>
      </div>
    </div>
  );
}

function StatusBar() {
  const Div = () => <div className="h-8 w-[3px] border-l border-r border-l-[#c8c8c8] border-r-white" />;
  return (
    <div className="flex h-[44px] shrink-0 items-center border-t-2 border-[#c9c9c9] pt-[2px] pl-[25px]">
      <Cell w="w-[37px]" className="pb-1">
        <Svg w={22} h={20}>
          <path d="M1 1H21V19H4L1 16Z" stroke="#68686c" strokeWidth={2} />
          <path d="M6 2V8H16V2M7 19V13H16V19M10 14V18" stroke="#68686c" strokeWidth={1.800} />
        </Svg>
      </Cell>
      <Cell w="w-[20px]"><Div /></Cell>
      <Cell w="w-[346px]">Page 1 of 1</Cell>
      <Cell w="w-[20px]"><Div /></Cell>
      <Cell w="w-[475px]" className="text-[28.600px]">0 words, 0 characters</Cell>
      <Cell w="w-[19px]"><Div /></Cell>
      <Cell w="w-[435px]">Default Page Style</Cell>
      <Cell w="w-[113px]"><Div /></Cell>
      <Cell w="w-[264px]">English (UK)</Cell>
      <Cell w="w-[18px]"><Div /></Cell>
      <Cell w="w-[82px]">Insert</Cell>
      <Cell w="w-[17px]"><Div /></Cell>
      <Cell w="w-[44px]">
        <Svg w={34} h={18}>
          <rect x={1.500} y={2} width={15} height={11} stroke="#2b7be8" strokeWidth={2.600} />
          <path d="M23 17H33M28 17V2H25" stroke="#9b9b9e" strokeWidth={2} />
        </Svg>
      </Cell>
      <Cell w="w-[61px]"><Div /></Cell>
      <Cell w="w-[242px]"><Div /></Cell>
      <Cell w="w-[21px]"><Div /></Cell>
      <Cell w="w-[30px]">
        <Svg w={18} h={20}><path d="M1 1H11L16 6V19H1Z" fill="#fff" stroke="#1a5ae8" strokeWidth={2.400} /></Svg>
      </Cell>
      <Cell w="w-[48px]">
        <Svg w={36} h={20}><path d="M1 1H10L15 6V19H1ZM21 1H30L35 6V19H21Z" stroke="#85858a" strokeWidth={2} /></Svg>
      </Cell>
      <Cell w="w-[52px]">
        <Svg w={34} h={20}><path d="M16 1H7L1 6V19H16ZM18 1H27L33 6V19H18Z" stroke="#77777c" strokeWidth={2.200} /></Svg>
      </Cell>
      <Cell w="w-[13px]"><Div /></Cell>
      <Svg w={268} h={32}>
        <circle cx={15} cy={16} r={14} fill="#f7f7f7" stroke="#a2a2a5" strokeWidth={2} />
        <path d="M7 16H23M245 16H261M253 8V24" stroke="#66666a" strokeWidth={2} />
        <path d="M38 16.500H231" stroke="#8f8f92" strokeWidth={3} />
        <path d="M77 11V22" stroke="#8f8f92" strokeWidth={2.400} />
        <path d="M122 2H147V20L134.500 31L122 20Z" fill="#fff" stroke="#9b9b9e" strokeWidth={2} strokeLinejoin="round" />
        <circle cx={253} cy={16} r={14} stroke="#a2a2a5" strokeWidth={2} />
      </Svg>
      <div className="ml-[7px] flex w-[17px] shrink-0"><Div /></div>
      <span className="tracking-[-0.2px]">110%</span>
    </div>
  );
}

/* ---------- character dialog ---------- */

const languages = [
  "Dhivehi", "Dogri", "Dzongkha", "Gujarati", "Hebrew", "Hindi", "Hungarian (Szekely-Hungarian Rovas)", "Kannada",
  "Kashmiri (India)", "Kashmiri (Kashmir)", "Khmer", "Kurdish, Central (Iran)", "Kurdish, Central (Iraq)",
  "Kurdish, Southern (Iran)", "Kurdish, Southern (Iraq)", "Kyrgyz (China)", "Lao", "Limbu", "Maithili",
  "Malay Arabic (Brunei Darussalam)", "Malay Arabic (Malaysia)", "Malayalam",
];

function FieldLabels() {
  return (
    <div className="flex h-9 items-center">
      <Cell w="w-[540px]">Family:</Cell>
      <Cell w="w-[230px]">Typeface:</Cell>
      <Cell w="w-[182px]">Size:</Cell>
      <span className="text-[28.600px]">Language:</span>
    </div>
  );
}

function FontCombos({ family }: { family: string }) {
  return (
    <>
      <Cell w="w-[540px]"><Combo text={family} className="w-[507px]" /></Cell>
      <Cell w="w-[230px]"><Combo text="Regular" className="w-[197px]" /></Cell>
      <Cell w="w-[182px]"><Combo text="12 pt" className="w-[149px]" /></Cell>
    </>
  );
}

function PushButton({ text, className }: { text: string; className: string }) {
  return (
    <div className={`${className} flex h-[40px] items-center justify-center rounded-[10px] bg-white pb-[2px] shadow-[0_0_0_1px_rgba(0,0,0,0.05),0_1px_3px_rgba(0,0,0,0.28)]`}>{text}</div>
  );
}

function TabSep() {
  return <div className="h-6 w-[2px] shrink-0 bg-[#c9c9c9]" />;
}

function CharacterDialog() {
  return (
    <div className="absolute top-[360px] left-[540px] flex h-[1127px] w-[1702px] flex-col rounded-[20px] bg-[#e9e9e9] shadow-[0_0_0_1.5px_rgba(0,0,0,0.2),0_36px_70px_rgba(0,0,0,0.42),0_0_30px_rgba(0,0,0,0.12)]">
      <div className="flex h-[57px] shrink-0 items-center rounded-t-[20px] border-b-2 border-[#cfcfd0] bg-[#ecedef] pl-4">
        <i className="size-6 rounded-full border border-[#e0443e] bg-[#fe5f57]" />
        <i className="ml-4 size-6 rounded-full border border-[#bfc0c2] bg-[#d1d2d4]" />
        <i className="ml-4 size-6 rounded-full border border-[#1dad2b] bg-[#31c748]" />
        <span className="ml-[666px] pb-px font-[Inter,sans-serif] text-[25.900px] font-bold text-[#4a4a4c]">Character</span>
      </div>
      <div className="relative z-10 mt-[19px] -mb-[22px] ml-[347px] flex h-[44px] w-[1026px] shrink-0 items-center rounded-[10px] bg-[#d8d8d8] shadow-[inset_0_0_0_1px_rgba(0,0,0,0.06)]">
        <Cell w="w-[141px]"><div className="flex h-[41px] w-[109px] items-center justify-center rounded-[9px] bg-white pr-[5px] shadow-[0_1px_3px_rgba(0,0,0,0.35)]">Font</div></Cell>
        <Cell w="w-[182px]" className="text-[28.600px]">Font Effects</Cell><Cell w="w-[29px]"><TabSep /></Cell>
        <Cell w="w-[131px]">Position</Cell><Cell w="w-[29px]"><TabSep /></Cell>
        <Cell w="w-[149px]">Hyperlink</Cell><Cell w="w-[29px]"><TabSep /></Cell>
        <Cell w="w-[179px]">Highlighting</Cell><Cell w="w-[30px]"><TabSep /></Cell>
        <Cell w="w-[110px]">Borders</Cell>
      </div>
      <div className="ml-[18px] flex h-[909px] w-[1666px] shrink-0 flex-col rounded-[10px] border border-[#d3d3d3] bg-[#e1e1e1] pl-[39px]">
        <div className="mt-[35px] -ml-[24px] flex h-9 shrink-0 items-center text-[28.800px] font-bold">Western Text Font</div>
        <div className="mt-2"><FieldLabels /></div>
        <div className="mt-4 flex h-[42px] pl-[10px]">
          <FontCombos family="Liberation Serif" />
          <Combo text="English (UK)" className="w-[636px]" />
        </div>
        <div className="mt-[31px] flex h-[41px] justify-between pr-[21px]">
          <span className="pt-[10px] text-[28.700px]">The same font will be used on both your printer and your screen.</span>
          <PushButton text="Features..." className="w-[176px] text-[28.800px]" />
        </div>
        <div className="mt-[30px] -ml-[24px] flex h-9 shrink-0 items-center text-[28.800px] font-bold">CTL Font</div>
        <div className="mt-2"><FieldLabels /></div>
        <div className="mt-4 flex h-[42px] pl-[10px]">
          <FontCombos family="Lucida Sans" />
          <div className="flex h-[42px] w-[637px] items-center justify-between rounded-[9px] bg-white pl-[46px] shadow-[0_0_0_2.5px_#82b5ec]">
            <span>Hindi</span>
            <DropButton double />
          </div>
        </div>
        <div className="mt-[38px] flex h-9 items-center text-[28.700px]">The same font will be used on both your printer and your screen.</div>
        <div className="mt-auto mb-[16px] flex h-[164px] w-[1590px] items-center overflow-hidden border-2 border-[#858585] border-t-[#5b5b5b] bg-white pl-px">
          <div className="mt-[26px] h-[2px] w-[601px] shrink-0 bg-black" />
          <span className="w-[222px] shrink-0 font-['Liberation_Serif',serif] text-[35.400px] whitespace-nowrap">Lorem ipsum</span>
          <span dir="rtl" className="shrink-0 font-['DejaVu_Sans',sans-serif] text-[30.500px] whitespace-nowrap [-webkit-text-stroke:0.7px_black]">أبجدية عربية</span>
        </div>
      </div>
      <div className="mt-[46px] ml-[31px]"><PushButton text="Help" className="w-[159px]" /></div>
    </div>
  );
}

function LanguagePopup() {
  return (
    <div className="absolute top-[870px] left-[1558px] flex h-[903px] w-[658px] border-2 border-black border-r-[#999] border-b-[#8f8f8f] bg-white shadow-[0_12px_40px_rgba(0,0,0,0.3)]">
      <div className="flex w-[624px] flex-col">
        <div className="flex h-8 shrink-0 items-center pl-[46px]">Bodo</div>
        <div className="flex h-9 shrink-0 items-center pl-[46px]">Burmese</div>
        <div className="flex h-9 shrink-0 items-center bg-[#d0e9c6] pl-[2px]">
          <Cell w="w-[44px]">
            <Svg w={32} h={32}>
              <Glyph x={0} y={17} size={22} len={29} heavy={0.7}>AB</Glyph>
              <path d="M13 24L19 30L31 16" stroke="#30d158" strokeWidth={3.200} />
            </Svg>
          </Cell>
          Central Kurdish (Sorani)
        </div>
        {languages.map((l) => (
          <div key={l} className="flex h-9 shrink-0 items-center pl-[46px] whitespace-nowrap">{l}</div>
        ))}
      </div>
      <div className="flex-1 border-l-2 border-[#e8e8e8] bg-[#fafafa] pt-[342px] pl-[6px]">
        <div className="h-[270px] w-[17px] rounded-full bg-[#c1c1c1]" />
      </div>
      <div className="absolute top-[52px] left-[-13px] h-[64px] w-[648px] border-[5.5px] border-[#ff2b1c]" />
    </div>
  );
}

export default function App() {
  return (
    <div className="relative flex h-[1800px] w-[2785px] flex-col overflow-hidden bg-linear-to-r from-[#0a2747] via-[#051f41] to-[#03132f] font-['Liberation_Sans',sans-serif] text-[28.430px] leading-none text-black">
      <MenuBar />
      <div className="relative flex h-[1750px] w-[2784px] shrink-0 flex-col overflow-hidden rounded-[20px] bg-[#ececec]">
        <div className="flex h-[57px] shrink-0 items-center border-b-2 border-[#c6c7c9] bg-[#e4e5e7] pl-4">
          <i className="size-6 rounded-full border border-[#b9babc] bg-[#cbcccd]" />
          <i className="ml-4 size-6 rounded-full border border-[#b9babc] bg-[#cbcccd]" />
          <i className="ml-4 size-6 rounded-full border border-[#b9babc] bg-[#cbcccd]" />
          <span className="ml-[1210px] font-[Inter,sans-serif] text-[26.800px] font-bold text-[#a3a4a6]">Untitled 1</span>
        </div>
        <StandardBar />
        <FormattingBar />
        <div className="flex h-[1510px] shrink-0">
          <div className="flex w-[2202px] shrink-0 flex-col overflow-hidden">
            <Ruler />
            <div className="mt-[45px] ml-[96px] w-[2006px] flex-1 shrink-0 border-2 border-b-0 border-[#979797] bg-white pt-[158px] pl-[159px]">
              <div className="h-[36px] w-[34px] border-r-2 border-b-2 border-[#b5b5b5]" />
            </div>
          </div>
          <div className="w-[30px] shrink-0 border-r-2 border-[#cfcfcf] bg-[#fafafa] pl-[6px]">
            <div className="mt-[2px] h-[900px] w-[17px] rounded-full bg-[#c1c1c1]" />
          </div>
          <Sidebar />
          <TabStrip />
        </div>
        <StatusBar />
        <div className="pointer-events-none absolute top-[57px] right-0 bottom-0 w-[70px] bg-linear-to-r from-transparent to-black/12" />
      </div>
      <CharacterDialog />
      <div className="absolute top-[928px] left-[2242px] h-[146px] w-[2px] bg-[#5b5b5b]" />
      <LanguagePopup />
    </div>
  );
}
